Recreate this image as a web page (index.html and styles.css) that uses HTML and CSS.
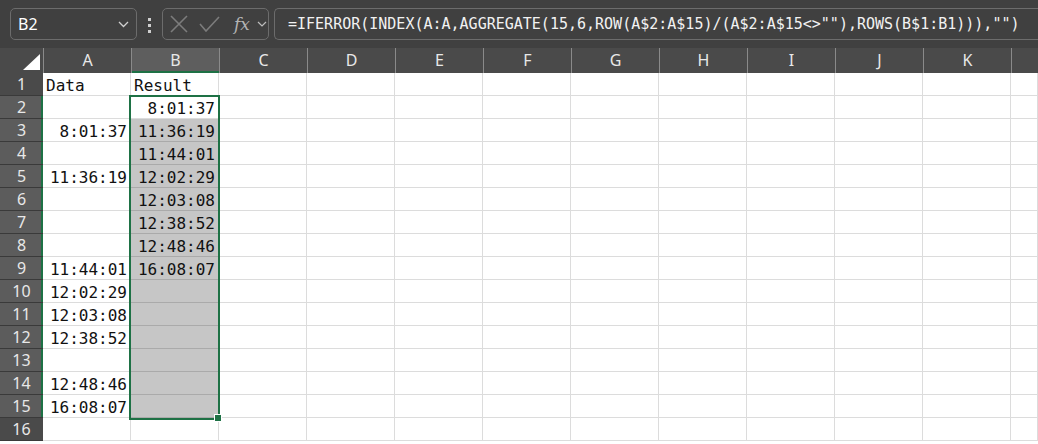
FILE: index.html
```html
<!DOCTYPE html>
<html lang="en">
<head>
  <meta charset="UTF-8" />
  <title>Sheet1</title>
  <link rel="stylesheet" href="styles.css">
</head>
<body>
  <div class="toolbar">
    <div class="namebox">
      <span>B2</span>
      <svg class="chev" width="11" height="7" viewBox="0 0 11 7"><path d="M1 1l4.5 4.5L10 1" fill="none" stroke="#d0d0d0" stroke-width="1.3"/></svg>
    </div>
    <div class="dots"><i></i><i></i><i></i></div>
    <div class="fxbox">
      <svg width="18" height="18" viewBox="0 0 18 18"><path d="M1 1l16 16M17 1L1 17" stroke="#7c7c7c" stroke-width="1.6"/></svg>
      <svg width="21" height="16" viewBox="0 0 21 16"><path d="M1 8l6 7L20 1" fill="none" stroke="#7c7c7c" stroke-width="1.6"/></svg>
      <span class="fx">fx</span>
      <svg class="chev" width="10" height="6" viewBox="0 0 10 6"><path d="M1 1l4 4 4-4" fill="none" stroke="#bdbdbd" stroke-width="1.2"/></svg>
    </div>
    <div class="formula">=IFERROR(INDEX(A:A,AGGREGATE(15,6,ROW(A$2:A$15)/(A$2:A$15&lt;&gt;""),ROWS(B$1:B1))),"")</div>
  </div>

  <div class="sheet-wrap">
    <div class="sheet" id="sheet"></div>
    <div class="selection"><div class="handle"></div></div>
  </div>

  <script>
    // the last column is only partly on screen, so its letter is left off
    const cols = ['A','B','C','D','E','F','G','H','I','J','K',''];
    const colA = {1:'Data',3:'8:01:37',5:'11:36:19',9:'11:44:01',10:'12:02:29',11:'12:03:08',12:'12:38:52',14:'12:48:46',15:'16:08:07'};
    const colB = {1:'Result',2:'8:01:37',3:'11:36:19',4:'11:44:01',5:'12:02:29',6:'12:03:08',7:'12:38:52',8:'12:48:46',9:'16:08:07'};
    const sheet = document.getElementById('sheet');

    function cell(cls, text) {
      const d = document.createElement('div');
      d.className = cls;
      if (text) d.textContent = text;
      sheet.appendChild(d);
    }

    // header row
    cell('corner');
    cols.forEach(c => cell(c === 'B' ? 'colhead active' : 'colhead', c));

    for (let r = 1; r <= 16; r++) {
      cell(r >= 2 && r <= 15 ? 'rowhead active' : 'rowhead', String(r));
      cols.forEach(c => {
        let cls = 'cell';
        let text = '';
        if (c === 'A') text = colA[r];
        if (c === 'B') text = colB[r];
        if (r === 1) cls += ' text';
        if (c === 'B' && r >= 3 && r <= 15) cls += ' picked';
        cell(cls, text);
      });
    }
  </script>
</body>
</html>
```

FILE: styles.css
```css
body {
  margin: 0;
  background: #fff;
  overflow: hidden;
  font-family: "Noto Sans", sans-serif;
}

/* formula bar */
.toolbar {
  height: 48px;
  box-sizing: border-box;
  background: #404040;
  display: flex;
  align-items: flex-start;
  padding: 8px 0 0 10px;
}
.namebox {
  width: 127px;
  height: 32px;
  box-sizing: border-box;
  border: 1px solid #6c6c6c;
  border-radius: 5px;
  display: flex;
  align-items: center;
  justify-content: space-between;
  padding: 0 7px 0 7px;
  color: #fff;
  font-size: 16px;
}
.dots {
  width: 25px;
  display: flex;
  flex-direction: column;
  align-items: center;
  gap: 3px;
  padding-top: 10px;
}
.dots i {
  width: 3px;
  height: 3px;
  background: #cfcfcf;
}
.fxbox {
  width: 107px;
  height: 32px;
  box-sizing: border-box;
  border: 1px solid #6c6c6c;
  border-radius: 5px;
  display: flex;
  align-items: center;
  gap: 11px;
  padding-left: 7px;
}
.fxbox .fx {
  font-family: "DejaVu Serif", serif;
  font-style: italic;
  font-size: 17px;
  color: #b4b4b4;
  margin-left: 3px;
  margin-right: -4px;
}
.formula {
  margin-left: 5px;
  flex: 1;
  height: 32px;
  box-sizing: border-box;
  border: 1px solid #6c6c6c;
  border-right: none;
  border-radius: 5px 0 0 5px;
  padding-left: 13px;
  font-family: "DejaVu Sans Mono", monospace;
  font-size: 15px;
  line-height: 30px;
  color: #f2f2f2;
  white-space: nowrap;
  overflow: hidden;
}

/* grid */
.sheet-wrap {
  position: relative;
}
.sheet {
  display: grid;
  grid-template-columns: 43px repeat(11, 88px) 27px;
  grid-template-rows: 25px repeat(16, 23px);
}
.corner {
  background: #4a4a4a;
  position: relative;
}
.corner::after {
  content: "";
  position: absolute;
  right: 3px;
  bottom: 3px;
  border-left: 17px solid transparent;
  border-bottom: 16px solid #fff;
}
.colhead {
  background: #4a4a4a;
  border-left: 1px solid #8a8a8a;
  color: #e8e8e8;
  font-size: 16px;
  text-align: center;
  line-height: 25px;
}
.colhead:first-of-type {
  border-left: none;
}
.colhead.active {
  background: #5e5e5e;
  box-shadow: inset 0 -2px 0 #1e7145;
}
.rowhead {
  background: #4a4a4a;
  border-bottom: 1px solid #3a3a3a;
  color: #e8e8e8;
  font-size: 16px;
  text-align: center;
  line-height: 23px;
}
.rowhead.active {
  background: #5c5c5c;
  box-shadow: inset -2px 0 0 #1e7145;
}
.cell {
  border-right: 1px solid #dcdcdc;
  border-bottom: 1px solid #dcdcdc;
  font-family: "DejaVu Sans Mono", monospace;
  font-size: 16px;
  line-height: 25px;
  color: #111;
  text-align: right;
  padding: 0 3px;
  white-space: nowrap;
  overflow: hidden;
}
.cell.text {
  text-align: left;
}
.cell.picked {
  background: #c6c6c6;
  border-bottom-color: #aaaaaa;
}

/* selected range B2:B15 */
.selection {
  position: absolute;
  left: 129px;
  top: 47px;
  width: 91px;
  height: 325px;
  box-sizing: border-box;
  border: 2px solid #1e7145;
  pointer-events: none;
}
.handle {
  position: absolute;
  right: -3px;
  bottom: -3px;
  width: 6px;
  height: 6px;
  background: #1e7145;
  outline: 1px solid #fff;
}
```
